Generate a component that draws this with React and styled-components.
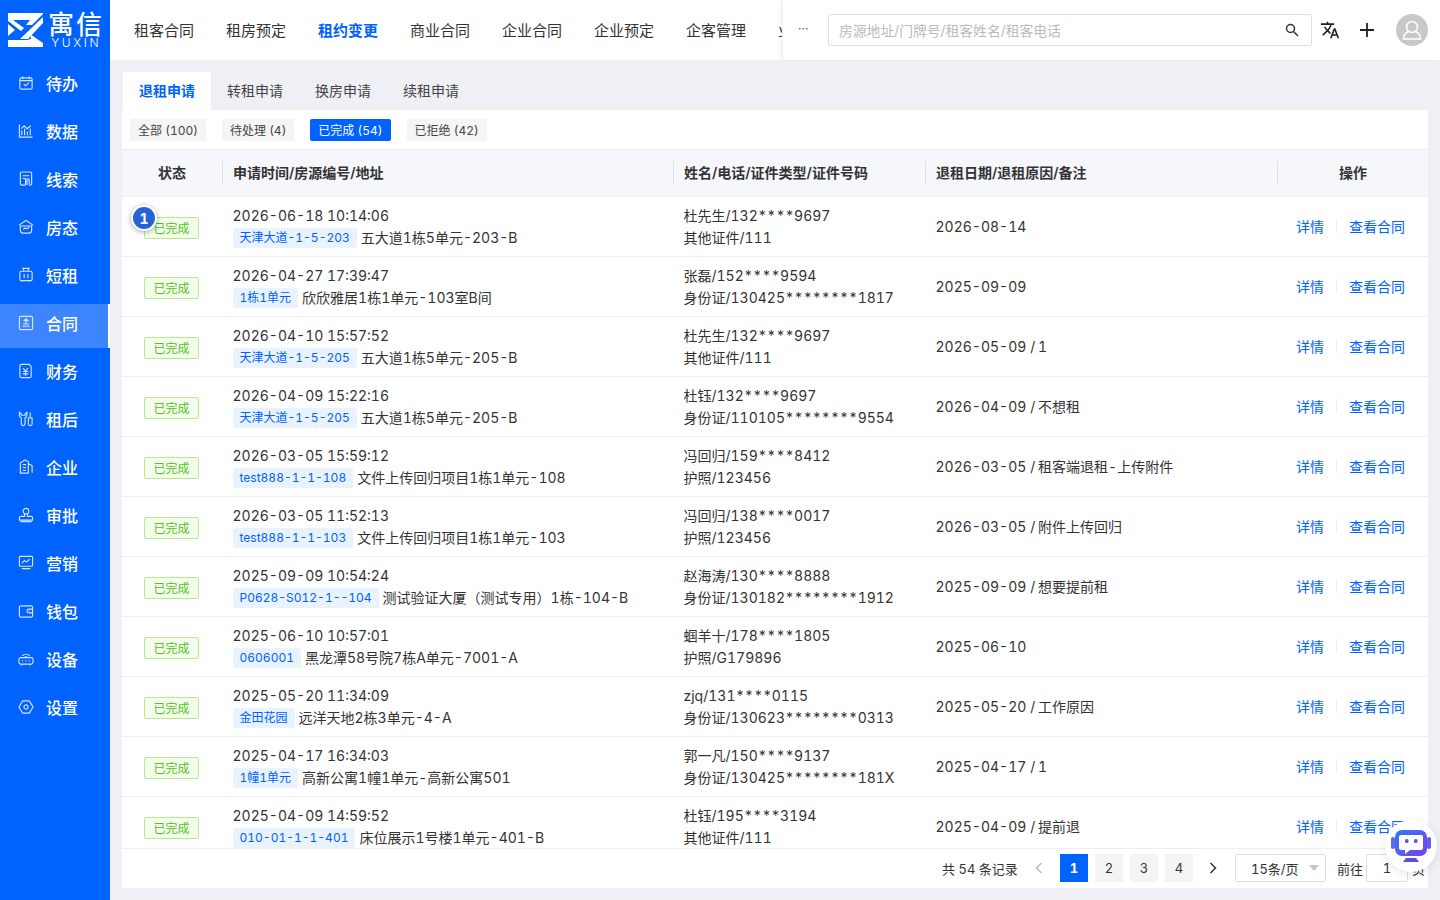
import React from 'react'
import styled, { createGlobalStyle } from 'styled-components'
import { MdTranslate } from 'react-icons/md'

const NAV_ICONS = {
    todo: <><rect x="2" y="3" width="13" height="12" rx="1.5" /><path d="M5 1.5v3M12 1.5v3M2 6h13M6 9.5l2 2 3.5-3" /></>,
    data: <><path d="M1.5 1.5v13.5h14" /><path d="M4 13V8M7 13V6M10 13V9M13 13V6M3.5 6l3-3 3 3 4-3" /></>,
    lead: <><path d="M8 15H4a1.5 1.5 0 0 1-1.5-1.5v-11A1.5 1.5 0 0 1 4 1h9a1.5 1.5 0 0 1 1.5 1.5V15" /><path d="M5 5h7M5 8h3v7M9.5 15V9.5a1.2 1.2 0 0 1 2.4 0V14a1.2 1.2 0 0 0 2.4 0" /></>,
    house: <><path d="M1 6.5 8.5 1.5 16 6.5" /><path d="M2.5 7v5a3 3 0 0 0 3 3h6a3 3 0 0 0 3-3V7" /><path d="M2.5 7.5h12M5.5 11l2-1.5 2 1 2.5-2" /></>,
    short: <><rect x="2" y="4.5" width="13" height="10" rx="1.5" /><path d="M4.500 1.500h8M6 1.500v3M11 1.500v3M6.500 7.500v4.500M10.500 7.500v4.500M4.500 14.500v1M12.500 14.500v1" /></>,
    contract: <><rect x="1.5" y="1.5" width="14" height="14" rx="1.5" /><path d="M4.500 12h8M5.500 9.500h6M8.500 4l2 2h-4zM8.500 6v3.500" /></>,
    finance: <><path d="M3.500 1.500H12l2 2.500v10a1.500 1.500 0 0 1-1.500 1.500h-9A1.500 1.500 0 0 1 2 14V3a1.500 1.500 0 0 1 1.500-1.500z" /><path d="M5.500 5.500 8 8.500l2.500-3M5 9h6M5 11.500h6M8 8.500v5" /></>,
    after: <><path d="M1.500 1.500v3a3 3 0 0 0 2 2.800v6.200a2 2 0 0 0 4 0V7.300a3 3 0 0 0 2-2.800v-3L7.500 3v1.500h-4V3z" /><path d="M13 1.500v6M11 7.500h4v6a2 2 0 0 1-4 0z" /></>,
    company: <><path d="M2.500 15V4l5-3 3.500 2v12zM11 5l4 2v7.500" /><path d="M5 6h3.500M5 9h3.500M5 12h3.500" /></>,
    approve: <><circle cx="8.500" cy="4.500" r="3" /><path d="M7 7.500v2.500H3a1.500 1.500 0 0 0-1.500 1.500V14h14v-2.500A1.500 1.500 0 0 0 14 10h-4V7.500M2.500 15.500h12" /></>,
    market: <><rect x="1.5" y="1.5" width="14" height="10.5" rx="1" /><path d="M4 8.500l3-2.500 2 1.500 3.500-3M4 14.500h9" /></>,
    wallet: <><path d="M14 3H3a1.500 1.500 0 0 0-1.500 1.500v9A1.500 1.500 0 0 0 3 15h11a1.500 1.500 0 0 0 1.500-1.500v-9A1.500 1.500 0 0 0 14 3z" /><path d="M15.500 6.500h-4a2 2 0 0 0 0 4h4M11.500 8.500h1" /></>,
    device: <><rect x="1" y="7" width="15" height="7" rx="2" /><path d="M4 14v1.500M13 14v1.500M4.500 10.500h1M8 10.500h1M11.500 10.500h1M4.500 5a6 6 0 0 1 8 0M6.500 7a3 3 0 0 1 4 0" /></>,
    setting: <><path d="M5 2h7l4 6.500L12 15H5L1 8.500z" /><circle cx="8.500" cy="8.500" r="2.200" /></>,
}

const NAV = [
    ['todo', '待办'], ['data', '数据'], ['lead', '线索'], ['house', '房态'], ['short', '短租'],
    ['contract', '合同'], ['finance', '财务'], ['after', '租后'], ['company', '企业'], ['approve', '审批'],
    ['market', '营销'], ['wallet', '钱包'], ['device', '设备'], ['setting', '设置'],
]

const TOP = ['租客合同', '租房预定', '租约变更', '商业合同', '企业合同', '企业预定', '企客管理', '业主合同']

const FILTERS = ['全部 (100)', '待处理 (4)', '已完成 (54)', '已拒绝 (42)']

const ROWS = [
    ['2026-06-18 10:14:06', '天津大道-1-5-203', '五大道1栋5单元-203-B', '杜先生/132****9697', '其他证件/111', '2026-08-14'],
    ['2026-04-27 17:39:47', '1栋1单元', '欣欣雅居1栋1单元-103室B间', '张磊/152****9594', '身份证/130425********1817', '2025-09-09'],
    ['2026-04-10 15:57:52', '天津大道-1-5-205', '五大道1栋5单元-205-B', '杜先生/132****9697', '其他证件/111', '2026-05-09', '1'],
    ['2026-04-09 15:22:16', '天津大道-1-5-205', '五大道1栋5单元-205-B', '杜钰/132****9697', '身份证/110105********9554', '2026-04-09', '不想租'],
    ['2026-03-05 15:59:12', 'test888-1-1-108', '文件上传回归项目1栋1单元-108', '冯回归/159****8412', '护照/123456', '2026-03-05', '租客端退租-上传附件'],
    ['2026-03-05 11:52:13', 'test888-1-1-103', '文件上传回归项目1栋1单元-103', '冯回归/138****0017', '护照/123456', '2026-03-05', '附件上传回归'],
    ['2025-09-09 10:54:24', 'P0628-S012-1--104', '测试验证大厦（测试专用）1栋-104-B', '赵海涛/130****8888', '身份证/130182********1912', '2025-09-09', '想要提前租'],
    ['2025-06-10 10:57:01', '0606001', '黑龙潭58号院7栋A单元-7001-A', '蝈羊十/178****1805', '护照/G179896', '2025-06-10'],
    ['2025-05-20 11:34:09', '金田花园', '远洋天地2栋3单元-4-A', 'zjq/131****0115', '身份证/130623********0313', '2025-05-20', '工作原因'],
    ['2025-04-17 16:34:03', '1幢1单元', '高新公寓1幢1单元-高新公寓501', '郭一凡/150****9137', '身份证/130425********181X', '2025-04-17', '1'],
    ['2025-04-09 14:59:52', '010-01-1-1-401', '床位展示1号楼1单元-401-B', '杜钰/195****3194', '其他证件/111', '2025-04-09', '提前退'],
]

const Global = createGlobalStyle`
    html, body { margin: 0; padding: 0; height: 100%; overflow: hidden; }
    body {
        font-family: Inter, "Noto Sans CJK SC", sans-serif;
        font-variant-numeric: tabular-nums;
        color: #333;
        background: #eff0f5;
    }
    * { box-sizing: border-box; }
`

const Page = styled.div`
    display: flex;
    width: 1440px;
    height: 900px;
    position: relative;
    overflow: hidden;
`
const Sidebar = styled.aside`
    width: 110px;
    flex: none;
    background: #0062ff;
    display: flex;
    flex-direction: column;
`
const LogoBar = styled.div`
    height: 60px;
    display: flex;
    align-items: flex-start;
    padding: 13px 0 0 8px;
    gap: 5px;
    color: #fff;
`
const LogoWords = styled.div`
    display: flex;
    flex-direction: column;
    align-items: center;
`
const LogoName = styled.span`
    display: block;
    font-size: 26px;
    line-height: 24px;
    font-weight: 500;
    letter-spacing: 2px;
    margin-right: -2px;
`
const LogoLatin = styled.span`
    display: block;
    font-size: 12px;
    line-height: 11px;
    letter-spacing: 2.6px;
    margin-right: -2.6px;
    font-weight: 300;
`
const NavItem = styled.div`
    height: 44px;
    margin-top: 4px;
    padding: 0 0 6px 18px;
    display: flex;
    align-items: center;
    gap: 12px;
    color: #fff;
    font-size: 16px;
    font-weight: 500;
    background: ${({ active }) => active ? '#3d85ff' : 'transparent'};
    border-right: ${({ active }) => active ? '2px solid #fff' : 'none'};
`
const NavIcon = styled.svg`
    width: 16px;
    height: 16px;
    flex: none;
    fill: none;
    stroke: #d6e5ff;
    stroke-width: 1.2;
`
const Main = styled.div`
    flex: 1;
    min-width: 0;
    display: flex;
    flex-direction: column;
`
const Header = styled.header`
    height: 60px;
    flex: none;
    display: flex;
    background: #fff;
`
const TopNav = styled.nav`
    width: 672px;
    flex: none;
    display: flex;
    align-items: center;
    padding: 0 0 2px 24px;
    gap: 32px;
    overflow: hidden;
`
const TopLink = styled.a`
    font-size: 15px;
    white-space: nowrap;
    color: ${({ active }) => active ? '#0062ff' : '#333'};
    font-weight: ${({ active }) => active ? 600 : 400};
`
const HeaderRight = styled.div`
    flex: 1;
    display: flex;
    align-items: center;
    padding-left: 15px;
    border-left: 1px solid #f0f0f2;
    box-shadow: -3px 0 4px rgba(0, 0, 0, 0.03);
`
const More = styled.span`
    width: 30px;
    font-size: 12px;
    color: #555;
    margin-top: -3px;
`
const Search = styled.div`
    width: 484px;
    height: 32px;
    border: 1px solid #dcdfe6;
    border-radius: 2px;
    display: flex;
    align-items: center;
    justify-content: space-between;
    padding: 0 12px 0 10px;
    font-size: 13.8px;
    color: #bbb;
`
const SearchIcon = styled.svg`
    width: 14px;
    height: 14px;
    flex: none;
    fill: none;
    stroke: #333;
    stroke-width: 1.5;
`
const Tools = styled.div`
    display: flex;
    align-items: center;
    margin-left: 8px;
    gap: 18px;
`
const Translate = styled(MdTranslate)`
    width: 20px;
    height: 20px;
    color: #222;
`
const Plus = styled.svg`
    width: 18px;
    height: 18px;
    fill: none;
    stroke: #222;
    stroke-width: 1.8;
`
const Avatar = styled.div`
    width: 32px;
    height: 32px;
    border-radius: 50%;
    background: #c8c8c8;
    display: flex;
    align-items: center;
    justify-content: center;
    margin-left: 2px;
`
const Content = styled.div`
    flex: 1;
    min-height: 0;
    padding: 12px;
    display: flex;
    flex-direction: column;
`
const Tabs = styled.div`
    display: flex;
    height: 38px;
    flex: none;
    margin-left: 1px;
`
const Tab = styled.div`
    width: 88px;
    padding-bottom: 2px;
    display: flex;
    align-items: center;
    justify-content: center;
    font-size: 14px;
    color: ${({ active }) => active ? '#0062ff' : '#444'};
    font-weight: ${({ active }) => active ? 600 : 400};
    background: ${({ active }) => active ? '#fff' : 'transparent'};
`
const Panel = styled.section`
    flex: 1;
    min-height: 0;
    background: #fff;
    display: flex;
    flex-direction: column;
`
const Filters = styled.div`
    height: 40px;
    flex: none;
    display: flex;
    align-items: center;
    padding-left: 8px;
    gap: 16px;
    border-bottom: 1px solid #eceef2;
`
const Filter = styled.div`
    height: 22px;
    padding: 0 8px;
    display: flex;
    align-items: center;
    border-radius: 2px;
    font-size: 12px;
    color: ${({ active }) => active ? '#fff' : '#444'};
    background: ${({ active }) => active ? '#0062ff' : '#f5f5f5'};
`
const COLS = '100px 451px 252px 352px 151px'
const HeadRow = styled.div`
    height: 47px;
    flex: none;
    display: grid;
    grid-template-columns: ${COLS};
    align-items: center;
    background: #f5f7fb;
    border-bottom: 1px solid #eceef2;
    font-size: 14px;
    font-weight: 600;
    color: #333;
`
const HeadCell = styled.div`
    height: 24px;
    padding-bottom: 2px;
    display: flex;
    align-items: center;
    justify-content: ${({ center }) => center ? 'center' : 'flex-start'};
    padding-left: ${({ center }) => center ? 0 : 10}px;
    border-left: ${({ first }) => first ? 'none' : '1px solid #dcdfe6'};
`
const Body = styled.div`
    flex: 1;
    min-height: 0;
    overflow: hidden;
`
const Row = styled.div`
    height: 60px;
    display: grid;
    grid-template-columns: ${COLS};
    align-items: center;
    border-bottom: 1px solid #eceef2;
    font-size: 14px;
    color: #333;
`
const StatusCell = styled.div`
    padding: 2px 0 0 22px;
`
const Status = styled.span`
    display: inline-flex;
    width: 55px;
    height: 22px;
    align-items: center;
    justify-content: center;
    font-size: 12px;
    color: #52c41a;
    background: #f4fdec;
    border: 1px solid #b7eb8f;
    border-radius: 2px;
`
const Cell = styled.div`
    padding-left: 10.5px;
    line-height: 22px;
    white-space: nowrap;
`
const Line = styled.div`
    height: 22px;
    display: flex;
    align-items: center;
    gap: 4px;
`
const Reason = styled.span`
    margin-left: 4px;
    word-spacing: -1px;
`
const HouseTag = styled.span`
    height: 20px;
    padding: 0 7px;
    display: inline-flex;
    align-items: center;
    font-size: 12px;
    color: #0062ff;
    background: #e8f3ff;
    border-radius: 2px;
`
const Actions = styled.div`
    display: flex;
    align-items: center;
    padding: 0 0 2px 19px;
    color: #0062ff;
`
const Sep = styled.span`
    width: 1px;
    height: 14px;
    margin: 0 12px;
    background: #eceef2;
`
const Footer = styled.div`
    height: 40px;
    flex: none;
    border-top: 1px solid #eceef2;
    display: flex;
    align-items: center;
    padding: 0 0 1px 820px;
    font-size: 13px;
    color: #333;
    white-space: nowrap;
`
const Total = styled.span`
    width: 89px;
`
const PageBtn = styled.span`
    width: 28px;
    height: 28px;
    display: flex;
    align-items: center;
    justify-content: center;
    margin-right: 7px;
    font-weight: ${({ active }) => active ? 700 : 400};
    color: ${({ active }) => active ? '#fff' : '#333'};
    background: ${({ active }) => active ? '#0062ff' : '#f4f4f5'};
`
const Arrow = styled.svg`
    width: 16px;
    height: 16px;
    flex: none;
    fill: none;
    stroke: ${({ disabled }) => disabled ? '#bbb' : '#333'};
    stroke-width: 1.5;
    margin: ${({ m }) => m};
`
const SizeSelect = styled.div`
    width: 91px;
    height: 28px;
    border: 1px solid #dcdfe6;
    border-radius: 2px;
    display: flex;
    align-items: center;
    justify-content: space-between;
    padding: 0 6px 0 15px;
`
const Caret = styled.span`
    width: 0;
    height: 0;
    border-left: 5px solid transparent;
    border-right: 5px solid transparent;
    border-top: 6px solid #c0c4cc;
`
const Goto = styled.span`
    margin-left: 11px;
`
const GotoInput = styled.span`
    width: 42px;
    height: 28px;
    margin-left: 3px;
    border: 1px solid #dcdfe6;
    border-radius: 2px;
    display: flex;
    align-items: center;
    justify-content: center;
`
const PageWord = styled.span`
    margin-left: 4px;
`
const StepBadge = styled.div`
    position: absolute;
    left: 131px;
    top: 205px;
    width: 26px;
    height: 26px;
    border-radius: 50%;
    background: #2563d8;
    border: 2px solid #fff;
    box-shadow: 0 1px 5px rgba(0, 0, 0, 0.35);
    display: flex;
    align-items: center;
    justify-content: center;
    color: #fff;
    font-size: 14px;
    font-weight: 700;
`
const Bot = styled.div`
    position: absolute;
    left: 1385px;
    top: 820px;
    width: 52px;
    height: 52px;
    border-radius: 50%;
    background: #fff;
    box-shadow: 0 2px 8px rgba(0, 0, 0, 0.1);
    display: flex;
    align-items: center;
    justify-content: center;
`

const Logo = () => (
    <svg width="35" height="34" viewBox="0 0 35 34" fill="#fff">
        <path d="M0 0H35V1L24 12H18L22 7H5L16 15 13 18 0 8z" />
        <path d="M0 11 7 17 0 23z" />
        <path d="M35 4V10L20 26H12z" />
        <path d="M22 21 35 30V34H0V27H19L23 26z" />
    </svg>
)

const App = () => (
    <Page>
        <Global />
        <Sidebar>
            <LogoBar>
                <Logo />
                <LogoWords>
                    <LogoName>寓信</LogoName>
                    <LogoLatin>YUXIN</LogoLatin>
                </LogoWords>
            </LogoBar>
            {NAV.map(([icon, label]) =>
                <NavItem key={icon} active={label === '合同'}>
                    <NavIcon viewBox="0 0 17 17">{NAV_ICONS[icon]}</NavIcon>
                    {label}
                </NavItem>
            )}
        </Sidebar>
        <Main>
            <Header>
                <TopNav>
                    {TOP.map(t => <TopLink key={t} active={t === '租约变更'}>{t}</TopLink>)}
                </TopNav>
                <HeaderRight>
                    <More>···</More>
                    <Search>
                        房源地址/门牌号/租客姓名/租客电话
                        <SearchIcon viewBox="0 0 14 14"><circle cx="5.5" cy="5.5" r="4" /><path d="M8.500 8.500 13 13" /></SearchIcon>
                    </Search>
                    <Tools>
                        <Translate />
                        <Plus viewBox="0 0 18 18"><path d="M9 2v14M2 9h14" /></Plus>
                        <Avatar>
                            <svg width="22" height="22" viewBox="0 0 22 22" fill="none" stroke="#fff" strokeWidth="1.5">
                                <circle cx="11" cy="8" r="5.5" />
                                <path d="M7.500 12.500C4.500 13.500 2.500 16 2.500 20h17c0-4-2-6.500-5-7.500" />
                            </svg>
                        </Avatar>
                    </Tools>
                </HeaderRight>
            </Header>
            <Content>
                <Tabs>
                    {['退租申请', '转租申请', '换房申请', '续租申请'].map((t, i) =>
                        <Tab key={t} active={i === 0}>{t}</Tab>
                    )}
                </Tabs>
                <Panel>
                    <Filters>
                        {FILTERS.map((f, i) => <Filter key={f} active={i === 2}>{f}</Filter>)}
                    </Filters>
                    <HeadRow>
                        <HeadCell first center>状态</HeadCell>
                        <HeadCell>申请时间/房源编号/地址</HeadCell>
                        <HeadCell>姓名/电话/证件类型/证件号码</HeadCell>
                        <HeadCell>退租日期/退租原因/备注</HeadCell>
                        <HeadCell center>操作</HeadCell>
                    </HeadRow>
                    <Body>
                        {ROWS.map(r =>
                            <Row key={r[0]}>
                                <StatusCell><Status>已完成</Status></StatusCell>
                                <Cell>
                                    <Line>{r[0]}</Line>
                                    <Line><HouseTag>{r[1]}</HouseTag>{r[2]}</Line>
                                </Cell>
                                <Cell>
                                    <Line>{r[3]}</Line>
                                    <Line>{r[4]}</Line>
                                </Cell>
                                <Cell>
                                    {r[5]}
                                    {r[6] && <Reason>/ {r[6]}</Reason>}
                                </Cell>
                                <Actions>详情<Sep />查看合同</Actions>
                            </Row>
                        )}
                    </Body>
                    <Footer>
                        <Total>共 54 条记录</Total>
                        <Arrow disabled viewBox="0 0 16 16" m="0 13px 0 0"><path d="M10.500 3 5.500 8l5 5" /></Arrow>
                        {[1, 2, 3, 4].map(n => <PageBtn key={n} active={n === 1}>{n}</PageBtn>)}
                        <Arrow viewBox="0 0 16 16" m="0 14px 0 5px"><path d="M5.500 3l5 5-5 5" /></Arrow>
                        <SizeSelect>15条/页<Caret /></SizeSelect>
                        <Goto>前往</Goto>
                        <GotoInput>1</GotoInput>
                        <PageWord>页</PageWord>
                    </Footer>
                </Panel>
            </Content>
        </Main>
        <StepBadge>1</StepBadge>
        <Bot>
            <svg width="42" height="36" viewBox="0 0 42 36">
                <defs>
                    <linearGradient id="botFill" x1="0" y1="0" x2="1" y2="1">
                        <stop offset="0" stopColor="#2f7bf6" />
                        <stop offset="1" stopColor="#7b3ff2" />
                    </linearGradient>
                </defs>
                <rect x="1" y="9" width="4" height="12" rx="2" fill="#5b6be8" />
                <rect x="37" y="9" width="4" height="12" rx="2" fill="#6b55ea" />
                <rect x="5" y="2" width="32" height="26" rx="7" fill="url(#botFill)" />
                <path fill="#fff" d="M11 7h20a2 2 0 0 1 2 2v11a2 2 0 0 1-2 2H20l-5 4v-4h-4a2 2 0 0 1-2-2V9a2 2 0 0 1 2-2z" />
                <rect x="15" y="11" width="3.5" height="4" rx="1.5" fill="#4d5fe6" />
                <rect x="24" y="11" width="3.5" height="4" rx="1.5" fill="#5b55e8" />
                <path fill="#5f4de8" d="M13 34h16l-3-4h-10z" />
            </svg>
        </Bot>
    </Page>
)

export default App
